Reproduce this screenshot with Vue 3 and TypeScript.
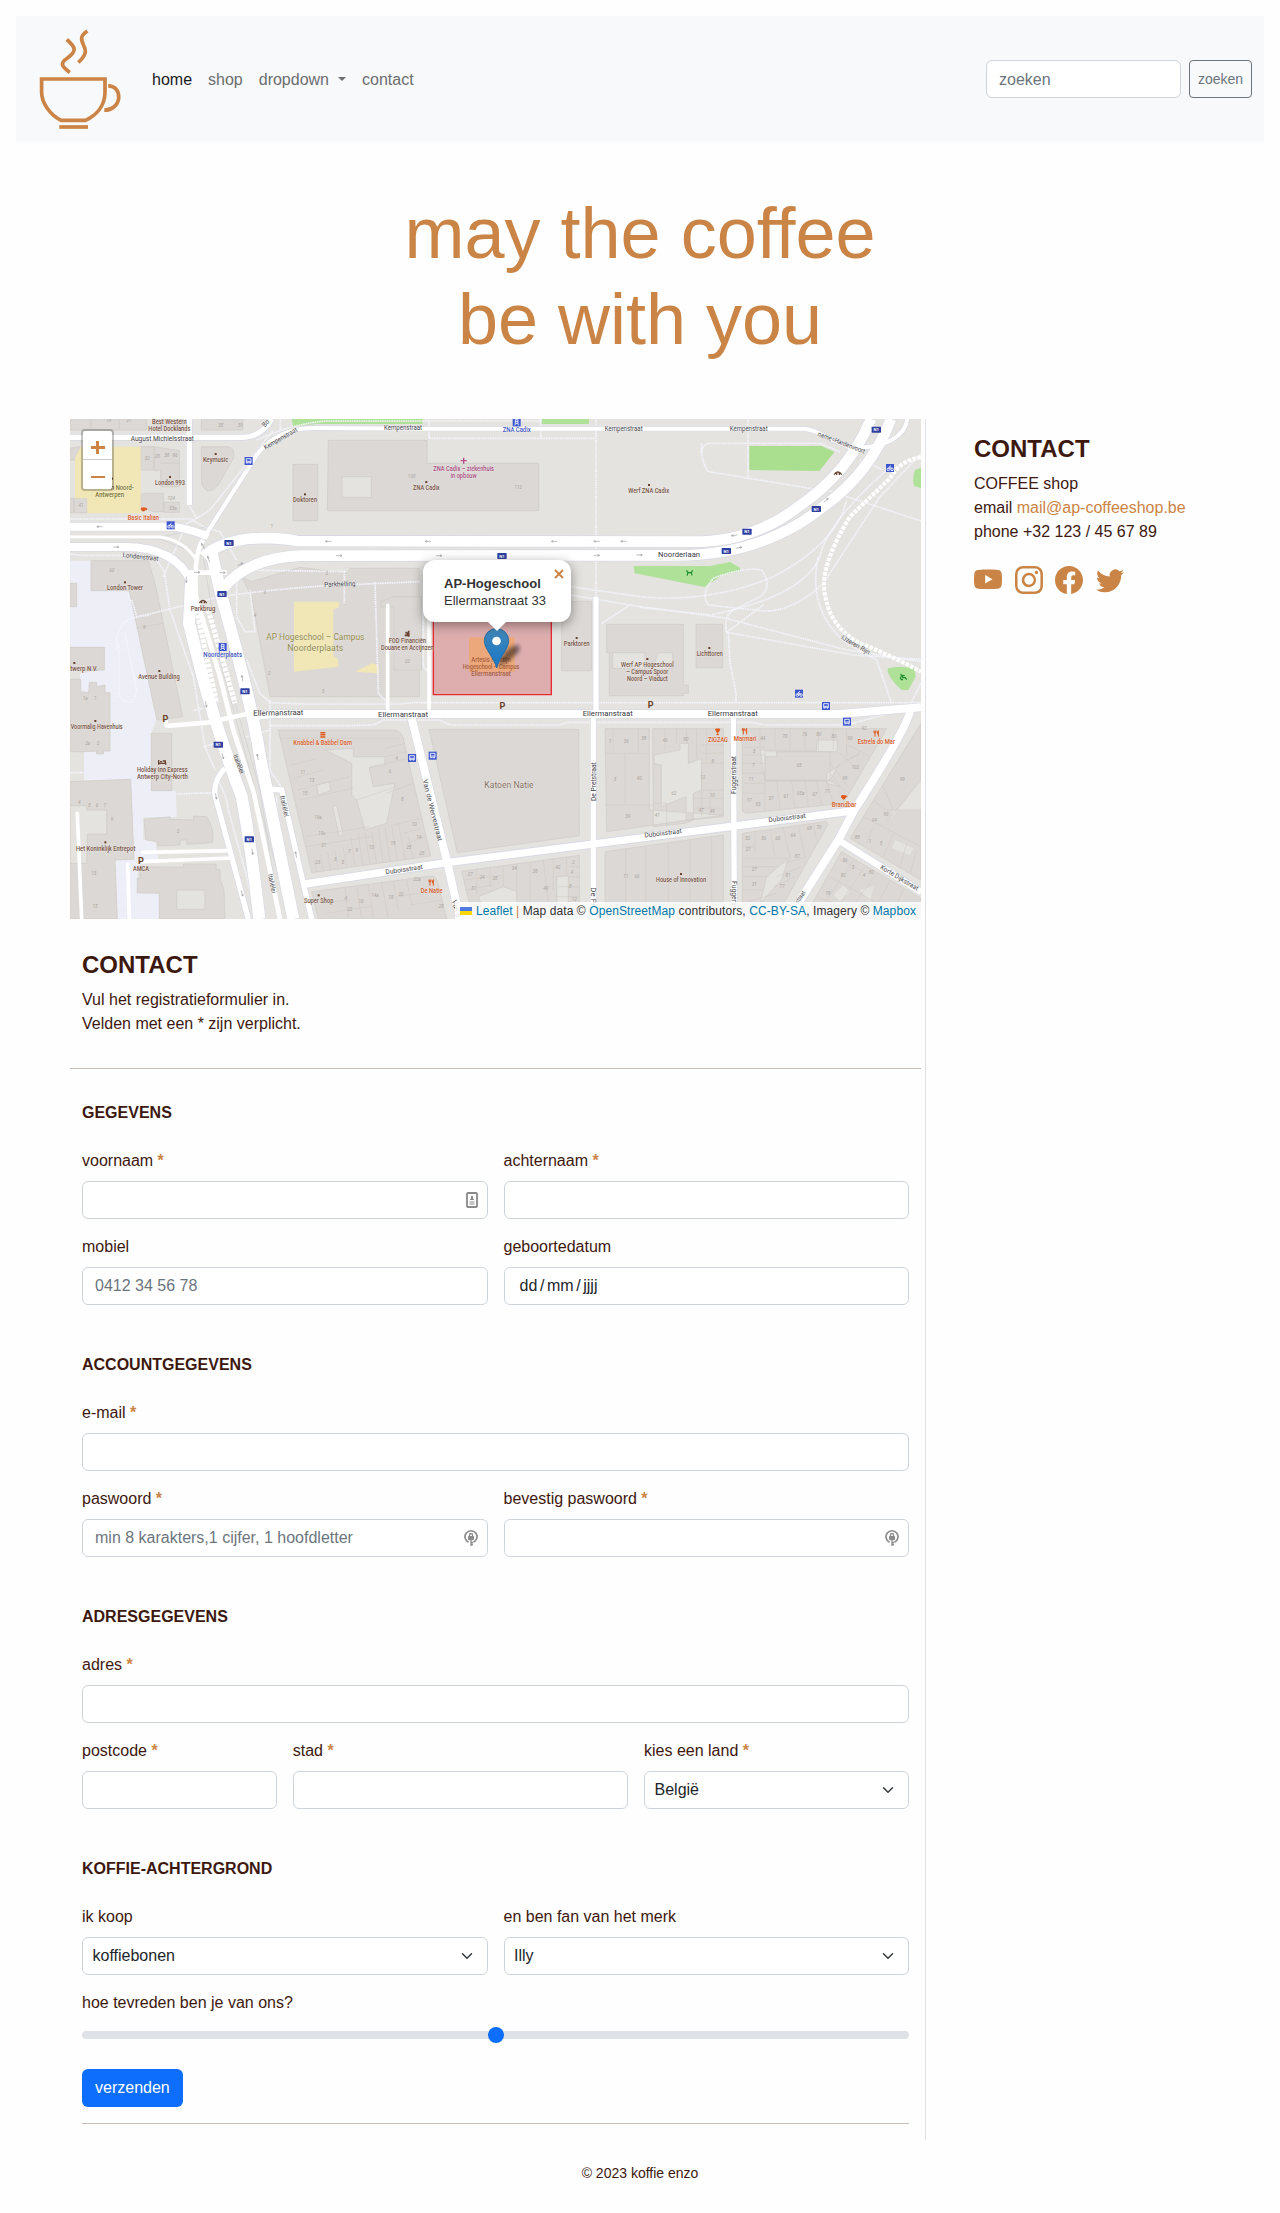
<script setup lang="ts">
import { ref } from 'vue'

interface MapLabel {
  x: number
  y: number
  t: string
  w: number
  k: string
  r?: number
}

const L = (k: string, x: number, y: number, w: number, t: string, r = 0): MapLabel => ({ k, x, y, w, t, r })

// Map coordinates use three units per CSS pixel.
const labels: MapLabel[] = [
  L('poi', 328, 41, 104, 'Best Western'),
  L('poi', 328, 63, 126, 'Hotel Docklands'),
  L('street', 307, 92, 190, 'August Michielsstraat'),
  L('poi', 467, 157, 76, 'Keymusic'),
  L('poi', 330, 225, 90, 'London 993'),
  L('school', 187, 239, 68, 'n Noord-'),
  L('school', 149, 261, 86, 'Antwerpen'),
  L('food', 250, 329, 94, 'Basic Italian'),
  L('poi', 735, 277, 72, 'Doktoren'),
  L('street', 665, 91, 112, 'Kempenstraat', -30),
  L('street', 622, 44, 22, 'Bo', -50),
  L('street', 241, 447, 108, 'Londenstraat', 6),
  L('poi', 195, 541, 108, 'London Tower'),
  L('poi', 429, 603, 74, 'Parkbrug'),
  L('street', 840, 529, 94, 'Parkhelling', -2),
  L('transit', 488, 742, 116, 'Noorderplaats'),
  L('campus', 766, 690, 294, 'AP Hogeschool – Campus'),
  L('campus', 766, 722, 168, 'Noorderplaats'),
  L('street', 1029, 61, 114, 'Kempenstraat'),
  L('street', 1691, 63, 114, 'Kempenstraat'),
  L('street', 2066, 62, 114, 'Kempenstraat'),
  L('transit', 1370, 67, 84, 'ZNA Cadix'),
  L('med', 1211, 183, 182, 'ZNA Cadix – ziekenhuis'),
  L('med', 1211, 204, 78, 'in opbouw'),
  L('poi', 1099, 240, 80, 'ZNA Cadix'),
  L('poi', 1766, 249, 122, 'Werf ZNA Cadix'),
  L('street', 2342, 104, 150, 'name=Hardenvoort', 21),
  L('streetBig', 1857, 442, 126, 'Noorderlaan'),
  L('poi', 1042, 699, 112, 'FOD Financiën'),
  L('poi', 1042, 721, 158, 'Douane en Accijnzen'),
  L('orange', 1293, 755, 118, 'Artesis Plantijn'),
  L('orange', 1293, 777, 170, 'Hogeschool – Campus'),
  L('orange', 1293, 798, 118, 'Ellermanstraat'),
  L('poi', 1550, 708, 78, 'Parktoren'),
  L('poi', 1762, 771, 158, 'Werf AP Hogeschool'),
  L('poi', 1762, 793, 126, '– Campus Spoor'),
  L('poi', 1762, 814, 122, 'Noord – Viaduct'),
  L('poi', 1949, 738, 78, 'Lichttoren'),
  L('street', 2384, 710, 96, 'IJzeren Rijn', 30),
  L('poi', 72, 782, 82, 'twerp N.V.'),
  L('poi', 297, 807, 124, 'Avenue Building'),
  L('poi', 110, 957, 156, 'Voormalig Havenhuis'),
  L('poi', 307, 1087, 152, 'Holiday Inn Express'),
  L('poi', 307, 1108, 152, 'Antwerp City-North'),
  L('poi', 137, 1322, 178, 'Het Koninklijk Entrepot'),
  L('poi', 243, 1382, 48, 'AMCA'),
  L('streetBig', 655, 916, 150, 'Ellermanstraat', -1),
  L('streetBig', 1029, 920, 150, 'Ellermanstraat'),
  L('streetBig', 1643, 917, 150, 'Ellermanstraat'),
  L('streetBig', 2018, 918, 150, 'Ellermanstraat'),
  L('food', 788, 1005, 176, 'Knabbel & Babbel Dam'),
  L('street', 530, 1064, 60, 'Italiëlei', 68),
  L('street', 667, 1190, 64, 'Italiëlei', 78),
  L('street', 630, 1422, 58, 'Italiëlei', 78),
  L('poi', 776, 1480, 88, 'Super Shop'),
  L('area', 1347, 1134, 148, 'Katoen Natie'),
  L('street', 1111, 1202, 190, 'Van de Wervestraat', 76),
  L('street', 1182, 1497, 52, 'Van d', 76),
  L('street', 1033, 1385, 112, 'Duboisstraat', -8),
  L('street', 1810, 1276, 112, 'Duboisstraat', -7),
  L('street', 2182, 1230, 112, 'Duboisstraat', -7),
  L('food', 1115, 1448, 66, 'De Natie'),
  L('street', 1607, 1115, 116, 'De Pretstraat', -90),
  L('street', 1594, 1460, 56, 'De Pr', 90),
  L('street', 2027, 1095, 114, 'Fuggerstraat', -90),
  L('street', 2017, 1453, 80, 'Fuggerst', 90),
  L('food', 1974, 995, 60, 'ZIGZAG'),
  L('food', 2055, 994, 68, 'Marmari'),
  L('food', 2449, 1001, 112, 'Estrela do Mar'),
  L('food', 2352, 1192, 74, 'Brandbar'),
  L('poi', 1863, 1416, 150, 'House of Innovation'),
  L('street', 2515, 1409, 130, 'Korte Dijkstraat', 31),
  L('street', 2226, 1465, 42, 'straat', -57)
]

const dots = [
  [467, 132], [330, 201], [156, 206], [735, 253], [195, 517], [1099, 216], [1767, 225], [1550, 684], [1762, 747],
  [1948, 714], [43, 759], [298, 783], [106, 933], [136, 1297], [776, 1456], [1863, 1392]
]

const shields = [
  [507, 399], [486, 552], [1326, 438], [2061, 365], [1999, 423], [2269, 297], [2449, 59], [555, 844], [475, 1004], [568, 1288]
]

const transit = [
  [566, 153, 'b'], [332, 346, 'c'], [488, 711, 't'], [1370, 37, 't'], [2490, 174, 'c'], [2217, 851, 'c'],
  [2298, 888, 'b'], [2361, 935, 'b'], [1056, 1044, 'b'], [1118, 1037, 'b']
] as [number, number, string][]

const arrows = [
  [119, 350, 180], [168, 411, 0], [805, 394, 180], [837, 437, 0], [541, 463, -25], [487, 488, 0], [379, 509, 90],
  [429, 408, 240], [446, 447, 250], [411, 487, 0], [1104, 394, 180], [1483, 394, 180], [1610, 394, 180],
  [1691, 394, 180], [1137, 437, 0], [1610, 436, 0], [1738, 435, 0], [2023, 376, 172], [2037, 413, -10],
  [2298, 271, -40], [547, 805, 260], [438, 883, 80], [488, 1038, 75], [593, 1041, 260], [468, 1159, 80],
  [577, 1325, 80], [708, 1334, 260], [546, 1450, 75]
]

const parking = [[316, 935], [243, 1361], [1327, 897], [1772, 895]]

const numbers: [number, number, string][] = [
  [146, 36, '19'], [206, 36, '21'], [482, 50, '35'], [541, 50, '39'], [262, 150, '32'], [292, 143, '28'],
  [320, 141, '38'], [345, 141, '96'], [334, 269, '104'], [339, 300, '53a'], [63, 292, '41'], [635, 354, '1'],
  [155, 486, '60'], [800, 494, '2'], [615, 552, '6'], [585, 620, '4'], [253, 656, '9'], [1055, 204, '100'],
  [1375, 237, '112'], [1042, 760, '22'], [76, 871, '1a'], [106, 871, '1'], [83, 1004, '2a'], [114, 1004, '2'],
  [628, 794, '2'], [789, 849, '5'], [58, 1183, '4'], [88, 1190, '5'], [111, 1190, '6'], [134, 1190, '7'],
  [156, 1233, '9'], [354, 1269, '2'], [101, 1394, '13'], [105, 1494, '15'], [728, 1092, '11'], [755, 1115, '13'],
  [735, 1156, '15'], [774, 1228, '19a'], [786, 1275, '19c'], [791, 1310, '21'], [773, 1362, '23'],
  [826, 1353, '3'], [848, 1361, '5'], [868, 1329, '7'], [890, 1325, '9'], [934, 1318, '13'], [1010, 1050, '4'],
  [990, 1090, '6'], [1027, 1173, '8'], [1063, 1247, '10'], [1076, 1287, '14'], [1046, 1317, '25'],
  [1085, 1334, '25'], [999, 1305, '19'], [903, 1478, '10'], [945, 1460, '14a'], [992, 1466, '18'],
  [1023, 1458, '22'], [1071, 1413, '22a'], [1143, 1493, '28'], [1231, 1398, '27'], [1266, 1406, '24'],
  [1305, 1410, '28'], [1363, 1380, '34'], [1425, 1389, '38'], [1493, 1376, '42'], [1540, 1361, '2'],
  [1535, 1393, '4'], [1531, 1434, '8'], [1543, 1472, '12'], [1457, 1439, '40'], [1241, 1439, '31'],
  [1650, 999, '1'], [1699, 999, '36'], [1751, 990, '38'], [1665, 1113, '3'], [1738, 1109, '40'], [1703, 1223, '39'],
  [1841, 1156, '62'], [1928, 1106, '12'], [1958, 1059, '8'], [1957, 1160, '10'], [1924, 1205, '47'],
  [1957, 1208, '49'], [1792, 1220, '41'], [1815, 997, '46'], [1877, 994, '50'], [2082, 1028, '3'],
  [2080, 1071, '7'], [2073, 1113, '11'], [2067, 1175, '17'], [2094, 1189, '53'], [2133, 1170, '57'],
  [2178, 1164, '61'], [2222, 1156, '65a'], [2264, 1158, '67'], [2302, 1148, '71'], [2217, 1071, '65'],
  [2108, 989, '44'], [2174, 984, '70'], [2234, 979, '76'], [2276, 978, '80'], [2322, 984, '86'],
  [2370, 990, '90'], [2412, 961, '92'], [2386, 1077, '102'], [2354, 1110, '99'], [2527, 1113, '98'],
  [2478, 1219, '96'], [2443, 1236, '94'], [2392, 1288, '88'], [2430, 1298, '1'], [2463, 1306, '5'],
  [2063, 1290, '52'], [2111, 1290, '56'], [2153, 1290, '60'], [2199, 1280, '64'], [2248, 1260, '68'],
  [2276, 1258, '70'], [2065, 1322, '21'], [2083, 1384, '27'], [2083, 1427, '31'], [2212, 1345, '87'],
  [2184, 1401, '81'], [2166, 1435, '77'], [2355, 1355, '86'], [2379, 1378, '3'], [2350, 1402, '82'],
  [2412, 1402, '4'], [2434, 1393, '80'], [2304, 1455, '78'], [1697, 1403, '11'],
  [1731, 1403, '66'], [857, 1470, '4'], [869, 1504, '22']
]

const query = ref('')
const score = ref(2)
const links = ['home', 'shop', 'dropdown', 'contact']
</script>

<template>
  <div class="page">
    <header class="bar">
      <svg class="logo" viewBox="38 28 84 102" fill="none" stroke="#cb8445" stroke-width="3.7">
        <path d="M41.6 79H105V92C105 107 95 116 85.5 120.4H61.2C50 115 41.6 103 41.6 92Z" />
        <path d="M59.3 127H88" />
        <path d="M108.2 85.8C116 85.8 119 92 118.7 98C118 105 112 110.3 104.3 110.2" />
        <path d="M66.7 39.5C76 47.5 77 51 67.5 58C60 63 61 66 69.8 72.6" />
        <path d="M87.4 31C80.5 35.5 80.5 39 83.5 45C86.5 51 86.5 55 78.3 62.5" />
      </svg>
      <nav class="links">
        <a v-for="(l, i) in links" :key="l" :class="{ active: i === 0 }">{{ l }}<i v-if="l === 'dropdown'" class="caret"></i></a>
      </nav>
      <form class="search" @submit.prevent>
        <input v-model="query" class="ctl" placeholder="zoeken" />
        <button class="btn-outline">zoeken</button>
      </form>
    </header>

    <h1>may the coffee<br />be with you</h1>

    <div class="columns">
      <main>
        <div class="map">
          <svg class="tiles" viewBox="30 27 2553 1500" preserveAspectRatio="none">
            <defs>
              <pattern id="plaza" width="8" height="8" patternUnits="userSpaceOnUse">
                <rect width="8" height="8" fill="#eff0f8" />
                <circle cx="2" cy="2" r="1.2" fill="#dfe2f0" /><circle cx="6" cy="6" r="1.2" fill="#dfe2f0" />
              </pattern>
              <linearGradient id="pin" x1="0" y1="0" x2="0" y2="1"><stop stop-color="#4287b8" /><stop offset="1" stop-color="#1777c8" /></linearGradient>
              <filter id="soft"><feGaussianBlur stdDeviation="7" /></filter>
            </defs>
            <rect x="30" y="27" width="2553" height="1500" fill="#e4e3df" />
            <path fill="url(#plaza)" d="M30 452H93V542H208L290 928L274 970V1142H348L350 1222H250V1290H285L295 1350L235 1365L230 1450H298V1527H172L165 1350L222 1348L212 1108L72 1112V1025L150 1023V848L60 845V790L133 780V712H30Z" />

            <g class="bld">
              <path d="M30 27H260V60H30ZM92 27V60M178 27V60M280 27H370V60H280ZM424 27H548V60H424Z" />
              <path d="M242 110H282V180H242ZM282 110L358 122V230H302V180L282 182ZM302 160H358M242 255L255 250H310V305H280L242 290ZM312 277H358V307H312Z" />
              <path d="M30 115L60 110V150H30ZM42 265H82V308H42ZM30 265H42V308H30Z" />
              <path d="M424 110H505Q527 115 520 145L475 225Q440 262 425 220Z" />
              <path d="M699 163H773V332H699Z" />
              <path fill-rule="evenodd" d="M805 91H1101V160H1436V302H802ZM846 200H934V262H846Z" />
              <path d="M93 452H265L285 520L368 920L300 930L290 928L208 542H93ZM228 655L308 640M30 520H50V590H30ZM30 712H133V780H30Z" />
              <path d="M545 500L575 515L720 472L860 490L870 475H1078V860H630L575 560Z" />
              <path d="M962 575L1002 560H1085V780H1002V590H962ZM1505 574H1595V782H1505Z" />
              <path fill-rule="evenodd" d="M1640 643H1870V825H1885V850H1870V857H1648V728H1640ZM1658 728H1755V775H1658ZM1775 780L1795 728H1838V775Z" />
              <path d="M1908 643H1988V773H1908Z" />
              <path d="M30 808H62V845L86 848L88 817H110V830L135 825V848H150V1023H130V1032H110V1023L72 1025H30ZM274 970H335V1142H274Z" />
              <path fill-rule="evenodd" d="M30 1115L212 1108L222 1348L165 1350L172 1527H30ZM30 1187H80V1200H140V1272H82L80 1360H30Z" />
              <path d="M252 1228L330 1220V1228L400 1230V1218L440 1220Q465 1260 458 1298L380 1303V1290H360V1305L293 1308V1295L258 1290Z" />
              <path fill-rule="evenodd" d="M240 1370L370 1372V1362L468 1362V1378H480V1405L492 1440L495 1527H298V1450L232 1448V1405H240ZM350 1440H435V1498H350Z" />
              <path fill-rule="evenodd" d="M655 960H1000Q1030 962 1033 1000L1112 1338L755 1388ZM795 1020L880 1015V1040H975V1065L927 1073L940 1130L1005 1120L980 1240L915 1260L890 1170L875 1155V1060ZM770 1125L808 1115L812 1142L775 1155ZM818 1190L830 1185L850 1275L838 1280Z" />
              <path d="M1107 958H1556L1558 1277L1192 1328Z" />
              <path d="M755 1445L1115 1398Q1130 1400 1134 1420L1160 1527H775Z" />
              <path fill-rule="evenodd" d="M1205 1384L1558 1336V1527H1240ZM1255 1460L1330 1430L1370 1445V1527H1280ZM1490 1400L1525 1398V1480H1490Z" />
              <path fill-rule="evenodd" d="M1635 956H1768V1200L1990 1215L1640 1265ZM1778 956H1990V1220L1905 1228L1875 1240L1780 1250ZM1782 1035L1860 1020V1000H1885V1060L1925 1045V1140L1900 1150V1230L1878 1230V1160L1804 1190V1066L1782 1060Z" />
              <path fill-rule="evenodd" d="M2047 956H2480L2350 1180L2055 1210L2047 1200ZM2100 1020L2165 1022H2270V990H2332V1025H2150V1040H2115V1112H2310L2340 1130L2300 1120V1090L2400 1030L2340 1060L2310 1110H2115Z" />
              <path d="M1635 1325L1990 1275V1527H1635Z" />
              <path fill-rule="evenodd" d="M2047 1270L2295 1235Q2308 1238 2300 1250L2145 1527H2047ZM2120 1400L2185 1345L2165 1410L2100 1480Z" />
              <path d="M2583 940L2370 1285L2583 1410ZM2345 1325L2583 1465V1527H2230Z" />
            </g>
            <g fill="#e4e3df">
              <path d="M2490 1230L2583 1110V1200H2500ZM2505 1290L2560 1315L2550 1335L2495 1315ZM2320 1455L2350 1425L2370 1445L2340 1475ZM2400 1440L2440 1430L2430 1475Z" />
            </g>
            <g class="lots">
              <path d="M660 985H1020M700 1105L790 1080M693 1065L765 1047M712 1140L870 1100M720 1170L880 1135M735 1280L930 1250M740 1310L930 1280M770 1385L760 1340M790 1383L782 1335M812 1380L803 1325M835 1376L825 1325M860 1373L850 1315M885 1370L872 1280M908 1367L895 1270M930 1364L915 1265M950 1361L935 1265M970 1358L955 1255M990 1356L975 1250M1012 1353L995 1245M1035 1350L1015 1240M1060 1347L1045 1280M975 1015L1035 1000M975 1040L1040 1025M930 1070L1050 1045M980 1150L1060 1120M1000 1245L1080 1225M1030 1270L1085 1255M1040 1300L1095 1280M890 1170L950 1150L1010 1130" />
              <path d="M855 1433L865 1527M890 1429L905 1527M925 1424L940 1527M965 1419L985 1527M1000 1414L1015 1500M1040 1410L1055 1485M1015 1460L1135 1440M1050 1485L1145 1470M790 1480L870 1470M800 1510L930 1490" />
              <path d="M1250 1378V1450M1290 1372V1430M1330 1366V1430M1370 1360V1445M1410 1355V1527M1450 1350L1465 1480M1480 1345V1440M1520 1341V1398M1525 1370H1558M1525 1400H1558M1495 1430H1558M1490 1460H1558M1210 1410L1330 1395M1215 1440L1300 1425" />
              <path d="M1660 956V1030H1635M1735 956V1030M1660 1030H1768M1695 1030V1185H1635M1695 1185H1780M1768 956V990M1815 956V1020M1850 956V1000M1880 956V1000M1910 956V1045M1940 956V1050M1925 1005H1990M1925 1030H1990M1925 1060H1990M1925 1140H1990M1900 1165H1990M1900 1195H1990M1925 1080V1220M1950 1140V1220M1780 1180H1820V1250" />
              <path d="M2047 990H2115M2047 1012H2115M2047 1035H2115M2047 1060H2115M2047 1090H2115M2047 1120H2115M2047 1150H2115M2100 956V1020M2145 956V1020M2190 956V1020M2235 956V1020M2275 956V1020M2320 956V1020M2360 956V1040M2115 1025H2310V1112H2115ZM2115 1112V1200M2150 1112L2160 1200M2195 1112L2205 1195M2235 1112L2245 1190M2270 1112L2285 1185M2300 1112L2320 1180M2310 1060L2365 1130M2340 1030L2400 1085M2365 1005L2430 1040M2310 1090L2355 1145" />
              <path d="M1697 1317V1527M1757 1309V1527M1825 1299V1527M1890 1290V1527M1955 1280V1527" />
              <path d="M2085 1265V1330M2130 1260L2145 1340M2170 1254L2190 1345M2215 1248L2235 1340M2260 1242L2270 1290M2047 1310H2080M2047 1345L2180 1345M2047 1370H2150M2047 1400H2130M2047 1440H2110M2047 1480L2150 1450M2100 1480L2110 1527M2170 1360L2240 1340M2150 1400L2225 1370M2140 1430L2205 1400" />
              <path d="M2410 1220L2583 1310M2440 1170L2500 1220M2470 1130L2500 1200M2500 1270L2470 1340M2440 1250L2420 1300M2540 1300L2520 1370M2570 1320L2550 1390M2583 1110L2480 1235M2583 1200H2480M2380 1350L2300 1470M2415 1370L2340 1480M2450 1390L2370 1500M2490 1410L2430 1527M2530 1440L2490 1527M2270 1460L2440 1527M2310 1400L2470 1490M2340 1350L2410 1385" />
            </g>

            <g fill="#f0e6b6">
              <path d="M45 145L62 110H242V310H82V265H45Z" />
              <path d="M702 575H837V590L820 600V738L835 748V770L702 785Z" />
              <path d="M885 785L935 760L955 765L957 790Z" />
            </g>
            <g fill="#b0e199">
              <path d="M695 27H1088V42H770L700 50ZM1445 27H1587V42H1445Z" />
              <path d="M2068 108H2285L2323 126L2278 183L2068 180Z" fill="#a9df8e" />
              <path d="M1721 468H1950L2010 456L2040 473V483L1985 497L1933 531L1724 490Z" />
              <path d="M2583 173L2565 180Q2555 210 2563 228L2583 235ZM2483 775Q2520 765 2562 775L2567 800L2545 840H2525Q2495 815 2483 785Z" />
            </g>

            <g class="foot">
              <path d="M30 327H390L430 350L480 365L530 450M30 432L65 436H180L290 450Q320 490 315 500L330 600L400 800L435 1010L465 1080M390 290L410 325L450 300L640 60M310 500L380 340L410 325" />
              <path d="M590 90Q700 40 800 33H1445M1107 30V85H1608M1608 27V570M1442 27V85M661 27V60" />
              <path d="M170 720V690Q175 640 215 625L480 560Q700 530 850 525L1080 515M853 580V485L560 480L530 520V620L555 665L585 665L570 540M215 570L230 620L270 615M195 670L230 840Q225 877 205 877Q175 870 177 840V700" />
              <path d="M30 1088H72M350 1152L460 1148M465 1100Q500 1150 505 1200L560 1400L590 1527M650 1160V1250L690 1400M400 902L430 895M430 1010L500 990M560 980L630 960M630 870V1080L670 1140M560 750L600 850L630 878L740 882H1020L1060 878H2583M630 947H870L940 945L970 930H1140L1170 945H1500L1520 937H2080L2110 945H2360L2480 912M945 517L955 850L985 880M1090 560V770L1110 790" />
              <path d="M1925 100Q1920 150 1945 185L2250 235L2300 240L2583 333M1925 130Q1925 102 1950 100H2280L2340 125M2064 27V205M2400 150L2470 180" />
              <path d="M1534 530L1740 560Q1950 580 2140 500Q2330 400 2360 270M1534 555L1740 590L1990 623L2360 720L2583 755M1625 640L1710 585M1740 592L1950 615Q2230 560 2280 440Q2300 340 2480 180M2000 667L2380 735L2583 748M2000 667L2110 585M2000 667Q1990 620 2020 600L2100 560Q2140 530 2105 480Q2050 470 1960 505Q1920 550 1945 585L2110 603Q2200 605 2290 520L2460 260L2583 130M2275 440Q2240 600 2360 700L2450 750L2495 880M2583 820L2550 885M2005 667L2010 760L2028 850V880" />
            </g>
            <g class="trackline">
              <path d="M30 385L300 387L430 440L480 750L640 1340L690 1527M440 370L540 220L590 130Q680 60 760 40M300 382L440 350M480 720L600 1140L660 1527" />
            </g>

            <g class="edge">
              <path stroke-width="20" d="M30 82H550Q605 80 635 27M388 27V285" />
              <path stroke-width="16" d="M430 385L590 135Q650 55 760 54L1090 56H2230Q2260 57 2300 82L2375 115Q2530 110 2542 27" />
              <path stroke-width="36" d="M2433 27Q2365 190 2215 290Q2080 395 1900 395L710 393Q650 380 560 387Q470 400 430 440M2493 27Q2430 190 2290 290Q2110 436 1850 436L720 437Q560 445 490 535" />
              <path stroke-width="28" d="M30 350H340Q400 360 445 380M30 411H190Q350 410 395 520" />
              <path stroke-width="40" d="M395 480L387 640L425 790Q470 960 545 1160Q575 1320 598 1527M455 430L485 560Q580 900 600 1040L700 1527" />
              <path stroke-width="20" d="M495 1075Q460 1110 465 1155L565 1527M630 1137L665 1140L755 1527M1608 560V912L1600 920V1527M2020 915L2023 1527" />
              <path stroke-width="28" d="M560 920L640 912H2340L2583 892M1055 925L1160 1350L1200 1527M735 1422L1160 1358L2375 1203M2550 900Q2550 940 2380 1205L2335 1290L2185 1527" />
              <path stroke-width="24" d="M2335 1290L2583 1446" />
            </g>
            <g class="road">
              <path stroke-width="16" d="M30 82H550Q605 80 635 27M388 27V285" />
              <path stroke-width="12" d="M430 385L590 135Q650 55 760 54L1090 56H2230Q2260 57 2300 82L2375 115Q2530 110 2542 27" />
              <path stroke-width="32" d="M2433 27Q2365 190 2215 290Q2080 395 1900 395L710 393Q650 380 560 387Q470 400 430 440M2493 27Q2430 190 2290 290Q2110 436 1850 436L720 437Q560 445 490 535" />
              <path stroke-width="24" d="M30 350H340Q400 360 445 380M30 411H190Q350 410 395 520" />
              <path stroke-width="36" d="M395 480L387 640L425 790Q470 960 545 1160Q575 1320 598 1527M455 430L485 560Q580 900 600 1040L700 1527" />
              <path stroke-width="9" d="M30 381H300Q370 390 410 450" />
              <path stroke-width="14" d="M430 390Q400 430 408 560L480 800L520 960L582 1150L660 1527" />
              <path stroke-width="16" d="M495 1075Q460 1110 465 1155L565 1527M630 1137L665 1140L755 1527M1608 560V912L1600 920V1527M2020 915L2023 1527" />
              <path stroke-width="24" d="M560 920L640 912H2340L2583 892M1055 925L1160 1350L1200 1527" />
              <path stroke-width="22" d="M735 1422L1160 1358L2375 1203" />
              <path stroke-width="24" d="M2550 900Q2550 940 2380 1205L2335 1290L2185 1527" />
              <path stroke-width="20" d="M2335 1290L2583 1446" />
              <path stroke-width="14" d="M320 948L440 938L560 912M400 488H500" />
              <path stroke-width="11" stroke-linecap="round" d="M983 586V905M1107 560V905M248 1327L510 1322M248 1355L515 1344M203 1362L208 1527M52 1210L65 1527M318 930V948" />
              <path stroke-width="15" stroke-dasharray="11 4" d="M410 600L470 880M445 600L525 880" />
              <path stroke-width="12" stroke-dasharray="11 4" d="M2583 142Q2520 150 2490 205L2370 320Q2290 450 2292 530Q2300 640 2390 695Q2500 740 2583 785" />
            </g>

            <g class="arr">
              <path v-for="(a, i) in arrows" :key="i" :transform="`translate(${a[0]} ${a[1]}) rotate(${a[2]})`" d="M-9 0H8M3 -3L9 0L3 3" />
            </g>

            <path d="M1120 600H1474V854H1120Z" fill="#d22532" fill-opacity=".28" />
            <path d="M1227 682H1364V785H1227Z" fill="#f5a356" fill-opacity=".6" />
            <path d="M1120 600V854H1474V600" fill="none" stroke="#e82a32" stroke-width="4" />

            <g v-for="(s, i) in shields" :key="'s' + i" :transform="`translate(${s[0]} ${s[1]})`">
              <rect x="-14" y="-9" width="28" height="18" rx="2" fill="#2f3f9f" />
              <text class="shield" y="5">N1</text>
            </g>
            <g v-for="(s, i) in transit" :key="'t' + i" :transform="`translate(${s[0]} ${s[1]})`" fill="none" stroke="#fff" stroke-width="2.5">
              <rect x="-12" y="-12" width="24" height="24" fill="#3b55cf" stroke="none" />
              <path v-if="s[2] === 'b'" d="M-7 -7H7V5H-7ZM-7 1H7M-5 5V8M5 5V8" />
              <path v-else-if="s[2] === 't'" d="M-4 -8H4V4H-4ZM-4 -2H4M-4 4L-6 9M4 4L6 9" />
              <path v-else d="M-9 4a4 4 0 1 0 8 0a4 4 0 1 0 -8 0M2 4a4 4 0 1 0 8 0a4 4 0 1 0 -8 0M-5 4L-1 -4L5 4M-1 -4L3 -7" />
            </g>

            <rect v-for="(d, i) in dots" :key="'d' + i" :x="d[0] - 3" :y="d[1] - 3" width="6" height="6" fill="#6a4330" />
            <text v-for="(p, i) in parking" :key="'p' + i" class="park" :x="p[0]" :y="p[1]">P</text>
            <text v-for="(n, i) in numbers" :key="'n' + i" class="num" :x="n[0]" :y="n[1]">{{ n[2] }}</text>

            <g fill="none" stroke="#6a4330" stroke-width="4">
              <path d="M418 579Q429 563 440 579M425 573V580M433 573V580M2322 194Q2334 178 2345 194M2330 187V195M2338 187V195" />
              <path d="M296 1050V1064M296 1060H317V1064M300 1055H306M308 1053H316V1060" />
              <path d="M1034 676H1042V667M1046 662V680M1036 668H1040M1043 674H1049" stroke-width="5" />
            </g>
            <path d="M1211 143V161M1202 152H1220" stroke="#b34b88" stroke-width="4" />
            <g fill="none" stroke="#178a2c" stroke-width="3.5">
              <path d="M1879 481L1884 488H1894L1898 481M1884 488L1881 497M1894 488L1896 496M2522 791L2528 803H2536L2540 809M2526 797H2534M2522 800Q2520 810 2529 809" />
            </g>
            <g fill="#e0591d" stroke="#e0591d" stroke-width="3">
              <path d="M244 294H256V299Q254 303 250 303Q245 302 244 299ZM256 295H260V299H256" />
              <path d="M781 968H796M781 974H796M781 981H796" stroke-width="4.5" />
              <path d="M1967 957H1979L1976 966H1970ZM1973 966V974M1969 974H1977" />
              <path d="M2345 1157H2357V1163L2351 1168L2345 1163ZM2357 1159H2362" />
              <path v-for="(p, i) in [[2055, 964], [2450, 971], [1115, 1418]]" :key="'f' + i" :transform="`translate(${p[0]} ${p[1]})`" d="M-5 -9V9M-8 -9V-3H-2V-9M5 9V-9Q1 -6 3 1H5" fill="none" />
            </g>

            <text v-for="(l, i) in labels" :key="i" :class="['lbl', l.k]" :textLength="l.w" lengthAdjust="spacingAndGlyphs" :transform="`translate(${l.x} ${l.y}) rotate(${l.r})`">{{ l.t }}</text>

            <path d="M1315 770Q1330 710 1375 705Q1395 725 1315 770Z" opacity=".5" filter="url(#soft)" />
            <path d="M1310 774C1303 744 1273 717 1273 692A36.5 36.5 0 0 1 1346 692C1346 717 1317 744 1310 774Z" fill="url(#pin)" stroke="#2c6ea3" stroke-width="3" />
            <circle cx="1309.5" cy="693" r="13" fill="#fff" />
          </svg>

          <div class="zoom"><span class="plus"></span><span class="minus"></span></div>
          <div class="popup">
            <b>AP-Hogeschool</b><br />Ellermanstraat 33
            <svg class="close" viewBox="0 0 10 10"><path d="M1 1L9 9M9 1L1 9" stroke="#cb8445" stroke-width="2" /></svg>
          </div>
          <div class="credit">
            <svg class="flag" width="12" height="8" viewBox="0 0 12 8"><path fill="#4c7be1" d="M0 0h12v4H0z" /><path fill="#ffd500" d="M0 4h12v4H0z" /></svg>
            <a>Leaflet</a> <em>|</em> Map data © <a>OpenStreetMap</a> contributors, <a>CC-BY-SA</a>, Imagery © <a>Mapbox</a>
          </div>
        </div>

        <section class="intro">
          <h2>CONTACT</h2>
          <p>Vul het registratieformulier in.<br />Velden met een * zijn verplicht.</p>
        </section>
        <hr class="full" />

        <form class="form" @submit.prevent>
          <h3>GEGEVENS</h3>
          <div class="grid">
            <label class="c6">voornaam <i>*</i>
              <span class="box ctl">
                <svg class="hint" width="12" height="16" viewBox="0 0 12 16" fill="none" stroke="#8a8a8a"><rect x="1" y="1" width="10" height="14" rx="1" stroke-width="1.8" /><path d="M6 4V8" stroke-width="2" /><path d="M4 7.5H8M3.5 10H8.5M3.5 12H8.5" /></svg>
              </span>
            </label>
            <label class="c6">achternaam <i>*</i><input class="ctl" /></label>
            <label class="c6">mobiel<input class="ctl" placeholder="0412 34 56 78" /></label>
            <label class="c6">geboortedatum
              <span class="box ctl date"><span>dd</span><span>/</span><span>mm</span><span>/</span><span>jjjj</span></span>
            </label>
          </div>

          <h3>ACCOUNTGEGEVENS</h3>
          <div class="grid">
            <label class="c12">e-mail <i>*</i><input class="ctl" /></label>
            <label v-for="(n, i) in ['paswoord', 'bevestig paswoord']" :key="n" class="c6">{{ n }} <i>*</i>
              <span class="box ctl"><span class="ph">{{ i === 0 ? 'min 8 karakters,1 cijfer, 1 hoofdletter' : '' }}</span>
                <svg class="hint" width="14" height="17" viewBox="0 0 14 17" fill="none" stroke="#8a8a8a"><path d="M4.5 13.2A6 6 0 1 1 9.5 13.2" stroke-width="1.7" /><path d="M4.5 7.5H9.5V10.7H4.5Z" fill="#8a8a8a" /><path d="M5.5 7.5V6a1.5 1.5 0 0 1 3 0V7.5M7 10.5V17M7 13.5H9M7 15.5H9" stroke-width="1.3" /></svg>
              </span>
            </label>
          </div>

          <h3>ADRESGEGEVENS</h3>
          <div class="grid">
            <label class="c12">adres <i>*</i><input class="ctl" /></label>
            <label class="c3">postcode <i>*</i><input class="ctl" /></label>
            <label class="c5">stad <i>*</i><input class="ctl" /></label>
            <label class="c4">kies een land <i>*</i>
              <span class="box ctl pick">België<svg viewBox="0 0 16 16"><path d="m2 5 6 6 6-6" /></svg></span>
            </label>
          </div>

          <h3>KOFFIE-ACHTERGROND</h3>
          <div class="grid">
            <label class="c6">ik koop
              <span class="box ctl pick">koffiebonen<svg viewBox="0 0 16 16"><path d="m2 5 6 6 6-6" /></svg></span>
            </label>
            <label class="c6">en ben fan van het merk
              <span class="box ctl pick">Illy<svg viewBox="0 0 16 16"><path d="m2 5 6 6 6-6" /></svg></span>
            </label>
            <label class="c12">hoe tevreden ben je van ons?<input v-model="score" class="range" type="range" min="0" max="4" /></label>
          </div>
          <button class="send">verzenden</button>
          <hr />
        </form>
      </main>

      <aside>
        <h2>CONTACT</h2>
        <p>COFFEE shop<br />email <a>mail@ap-coffeeshop.be</a><br />phone +32 123 / 45 67 89</p>
        <div class="social">
          <svg viewBox="0 0 16 16"><path d="M8.051 1.999h.089c.822.003 4.987.033 6.110.335a2.010 2.010 0 0 1 1.415 1.420c.101.380.172.883.220 1.402l.010.104.022.260.008.104c.065.914.073 1.770.074 1.957v.075c-.001.194-.010 1.108-.082 2.060l-.008.105-.009.104c-.050.572-.124 1.140-.235 1.558a2.007 2.007 0 0 1-1.415 1.420c-1.160.312-5.569.334-6.180.335h-.142c-.309 0-1.587-.006-2.927-.052l-.170-.006-.087-.004-.171-.007-.171-.007c-1.110-.049-2.167-.128-2.654-.260a2.007 2.007 0 0 1-1.415-1.419c-.111-.417-.185-.986-.235-1.558L.090 9.820l-.008-.104A31.400 31.400 0 0 1 0 7.680v-.123c.002-.215.010-.958.064-1.778l.007-.103.003-.052.008-.104.022-.260.010-.104c.048-.519.119-1.023.220-1.402a2.007 2.007 0 0 1 1.415-1.420c.487-.130 1.544-.210 2.654-.260l.170-.007.172-.006.086-.003.171-.007A99.788 99.788 0 0 1 7.858 2h.193zM6.400 5.209v4.818l4.157-2.408L6.400 5.209z" /></svg>
          <svg viewBox="0 0 16 16"><path d="M8 0C5.829 0 5.556.010 4.703.048 3.850.088 3.269.222 2.760.420a3.917 3.917 0 0 0-1.417.923A3.927 3.927 0 0 0 .420 2.760C.222 3.268.087 3.850.048 4.700.010 5.555 0 5.827 0 8.001c0 2.172.010 2.444.048 3.297.040.852.174 1.433.372 1.942.205.526.478.972.923 1.417.444.445.890.719 1.416.923.510.198 1.090.333 1.942.372C5.555 15.990 5.827 16 8 16s2.444-.010 3.298-.048c.851-.040 1.434-.174 1.943-.372a3.916 3.916 0 0 0 1.416-.923c.445-.445.718-.891.923-1.417.197-.509.332-1.090.372-1.942C15.990 10.445 16 10.173 16 8s-.010-2.445-.048-3.299c-.040-.851-.175-1.433-.372-1.941a3.926 3.926 0 0 0-.923-1.417A3.911 3.911 0 0 0 13.240.420c-.510-.198-1.092-.333-1.943-.372C10.443.010 10.172 0 7.998 0h.003zm-.717 1.442h.718c2.136 0 2.389.007 3.232.046.780.035 1.204.166 1.486.275.373.145.640.319.920.599.280.280.453.546.598.920.110.281.240.705.275 1.485.039.843.047 1.096.047 3.231s-.008 2.389-.047 3.232c-.035.780-.166 1.203-.275 1.485a2.470 2.470 0 0 1-.599.919c-.280.280-.546.453-.920.598-.280.110-.704.240-1.485.276-.843.038-1.096.047-3.232.047s-2.390-.009-3.233-.047c-.780-.036-1.203-.166-1.485-.276a2.478 2.478 0 0 1-.920-.598 2.480 2.480 0 0 1-.600-.920c-.109-.281-.240-.705-.275-1.485-.038-.843-.046-1.096-.046-3.233 0-2.136.008-2.388.046-3.231.036-.780.166-1.204.276-1.486.145-.373.319-.640.599-.920.280-.280.546-.453.920-.598.282-.110.705-.240 1.485-.276.738-.034 1.024-.044 2.515-.045v.002zm4.988 1.328a.960.960 0 1 0 0 1.920.960.960 0 0 0 0-1.920zm-4.270 1.122a4.109 4.109 0 1 0 0 8.217 4.109 4.109 0 0 0 0-8.217zm0 1.441a2.667 2.667 0 1 1 0 5.334 2.667 2.667 0 0 1 0-5.334z" /></svg>
          <svg viewBox="0 0 16 16"><path d="M16 8.049c0-4.446-3.582-8.050-8-8.050C3.580 0-.002 3.603-.002 8.050c0 4.017 2.926 7.347 6.750 7.951v-5.625h-2.030V8.050H6.750V6.275c0-2.017 1.195-3.131 3.022-3.131.876 0 1.791.157 1.791.157v1.980h-1.009c-.993 0-1.303.621-1.303 1.258v1.510h2.218l-.354 2.326H9.250V16c3.824-.604 6.750-3.934 6.750-7.951z" /></svg>
          <svg viewBox="0 0 16 16"><path d="M5.026 15c6.038 0 9.341-5.003 9.341-9.334 0-.140 0-.282-.006-.422A6.685 6.685 0 0 0 16 3.542a6.658 6.658 0 0 1-1.889.518 3.301 3.301 0 0 0 1.447-1.817 6.533 6.533 0 0 1-2.087.793A3.286 3.286 0 0 0 7.875 6.030a9.325 9.325 0 0 1-6.767-3.429 3.289 3.289 0 0 0 1.018 4.382A3.323 3.323 0 0 1 .640 6.575v.045a3.288 3.288 0 0 0 2.632 3.218 3.203 3.203 0 0 1-.865.115 3.230 3.230 0 0 1-.614-.057 3.283 3.283 0 0 0 3.067 2.277A6.588 6.588 0 0 1 .780 13.580a6.320 6.320 0 0 1-.780-.045A9.344 9.344 0 0 0 5.026 15z" /></svg>
        </div>
      </aside>
    </div>
    <footer>© 2023 koffie enzo</footer>
  </div>
</template>

<style>
body { margin: 0; background: #fefefe; }
</style>

<style scoped>
* { box-sizing: border-box; }
.page { width: 1280px; height: 2213px; padding: 16px 16px 0; background: #fefefe; color: #3d180e; font: 16px/24px "Liberation Sans", Arial, sans-serif; }
input, button { font: inherit; }
.bar { display: flex; align-items: center; height: 126px; padding: 0 12px 0 22px; background: #f8f9fb; }
.logo { width: 84px; height: 102px; flex: none; }
.links { display: flex; gap: 16px; margin-left: 30px; padding-top: 2px; color: #6c6e70; }
.links .active { color: #191a1b; }
.caret { display: inline-block; margin-left: 9px; vertical-align: 4px; border: 4.5px solid transparent; border-top-color: #6c6e70; border-bottom: 0; }
.search { display: flex; gap: 8px; margin-left: auto; }
.search input { width: 195px; margin: 0; padding: 7px 12px 5px; }
.ctl { display: block; width: 100%; height: 38px; padding: 6px 12px; border: 1px solid #ced4da; border-radius: 6px; background: #fff; color: #212529; outline: 0; }
.ctl::placeholder { color: #6c757d; opacity: 1; }
.btn-outline { width: 63px; height: 38px; padding: 0; font-size: 14px; color: #6c757d; background: none; border: 1px solid #6c757d; border-radius: 4px; }
h1 { margin: 48px 0 56px; text-align: center; font-size: 72px; line-height: 86.4px; font-weight: 400; color: #c98446; }
.columns { display: flex; height: 1721px; }
main { width: 856px; margin-left: 54px; padding-right: 4px; border-right: 1px solid #dee2e6; flex: none; }
.map { position: relative; width: 851px; height: 500px; overflow: hidden; background: #e4e3df; }
.tiles { display: block; width: 851px; height: 500px; }
.bld path { fill: #dcd8d5; stroke: #cfcac6; stroke-width: 2; }
.lots { fill: none; stroke: #cec9c5; stroke-width: 1.5; }
.foot { fill: none; stroke: #f3f4fc; stroke-width: 5; stroke-dasharray: 5 2; }
.trackline { fill: none; stroke: #cfcfd3; stroke-width: 2; }
.edge { fill: none; stroke: #d8d9e4; }
.road { fill: none; stroke: #fff; }
.arr { fill: none; stroke: #8a8a8e; stroke-width: 1.6; }
.shield { font: bold 13px Roboto, sans-serif; fill: #fff; stroke: none; text-anchor: middle; }
.park { font: bold 27px Roboto, sans-serif; fill: #6a3d26; text-anchor: middle; }
.num { font: italic 14px Roboto, sans-serif; fill: #aaa6a2; text-anchor: middle; }
.lbl { font: 500 20px Roboto, sans-serif; text-anchor: middle; paint-order: stroke; stroke: #ffffff80; stroke-width: 2px; }
.poi { fill: #765243; }
.street { fill: #444449; font-weight: 400; }
.streetBig { fill: #3a3a3f; font-size: 23px; font-weight: 400; }
.school { fill: #77722b; }
.campus { fill: #908847; font-size: 25px; font-weight: 400; }
.food { fill: #d65a25; }
.transit { fill: #4258c4; }
.med { fill: #a84b80; }
.orange { fill: #a8603c; stroke: none; }
.area { fill: #85705f; font-size: 25px; font-weight: 400; }
.zoom { position: absolute; left: 10.5px; top: 10.5px; width: 33px; height: 62px; border: 2px solid #0000003a; border-radius: 4px; background: #fff; background-clip: padding-box; }
.zoom span { display: flex; height: 29px; position: relative; }
.zoom .plus { border-bottom: 1px solid #ccc; }
.zoom span::before, .plus::after { content: ""; position: absolute; left: 8px; top: 15px; width: 14px; height: 3px; background: #cb8445; }
.zoom .minus::before { top: 16px; height: 2px; }
.zoom .plus::after { left: 13.5px; top: 10px; width: 3px; height: 13px; }
.popup { position: absolute; left: 353px; top: 141px; width: 148px; height: 62px; padding: 15px 0 0 21px; border-radius: 12px; background: #fff; box-shadow: 0 3px 12px #0006; color: #333; font-size: 13px; line-height: 17px; }
.popup::after { content: ""; position: absolute; left: 64px; top: 61.5px; border: 10px solid transparent; border-top-color: #fff; border-bottom: 0; }
.close { position: absolute; right: 7px; top: 9px; width: 10px; height: 10px; }
.credit { position: absolute; right: 0; bottom: 0; height: 17px; padding: 0 5px; background: #ffffffcc; color: #333; font-size: 12px; line-height: 18px; letter-spacing: .09px; white-space: nowrap; }
.flag { margin-right: 4px; }
.credit a { color: #0078a8; }
.credit em { color: #cb8445; font-style: normal; }
h2 { margin: 0 0 8px; font-size: 24px; line-height: 29px; font-weight: 700; }
p { margin: 0; }
.intro { padding: 31px 12px 0; height: 149px; }
.intro h2 { margin-bottom: 9px; }
hr { margin: 0; border: 0; height: 1px; background: #cbbdb9; }
.full { width: 851px; }
.form { width: 827px; margin-left: 12px; padding-top: 32px; }
h3 { margin: 0; height: 48px; font-size: 16px; line-height: 24px; }
.grid { display: flex; flex-wrap: wrap; gap: 16px; margin-bottom: 48px; }
.grid label { display: block; height: 70px; }
.grid label .ctl { margin-top: 8px; }
label > i { font-style: normal; font-weight: 700; color: #cb8445; }
.c3 { width: 194.75px; }
.c4 { width: 265px; }
.c5 { width: 335.25px; }
.c6 { width: 405.5px; }
.c12 { width: 827px; }
.grid:last-of-type { margin-bottom: 8px; }
.box { position: relative; display: flex; align-items: center; }
.box .ph { color: #6c757d; }
.hint { margin-left: auto; margin-right: -3px; }
.date { gap: 2.6px; padding-left: 15px; }
.pick { justify-content: space-between; padding-left: 9.5px; }
.pick path { fill: none; stroke: #343a40; stroke-width: 2; stroke-linecap: round; stroke-linejoin: round; }
.pick svg { width: 12px; height: 16px; margin-right: 2px; }
.range { appearance: none; display: block; width: 100%; height: 24px; margin: 8px 0 0; padding: 0; background: none; }
.range::-webkit-slider-runnable-track { height: 8px; border-radius: 8px; background: #dee2e6; }
.range::-webkit-slider-thumb { appearance: none; width: 16px; height: 16px; margin-top: -4px; border-radius: 50%; background: #0d6efd; }
.send { display: block; height: 38px; margin-bottom: 16px; padding: 0 13px; border: 0; border-radius: 6px; background: #0d6efd; color: #fff; }
aside { padding: 15px 0 0 48px; }
aside h2 { margin-bottom: 9px; }
aside a { color: #cb8445; }
.social { display: flex; gap: 12.7px; margin-top: 22px; }
.social svg { width: 28px; height: 28px; fill: #c98446; }
footer { padding-top: 21px; text-align: center; font-size: 14px; }
</style>
